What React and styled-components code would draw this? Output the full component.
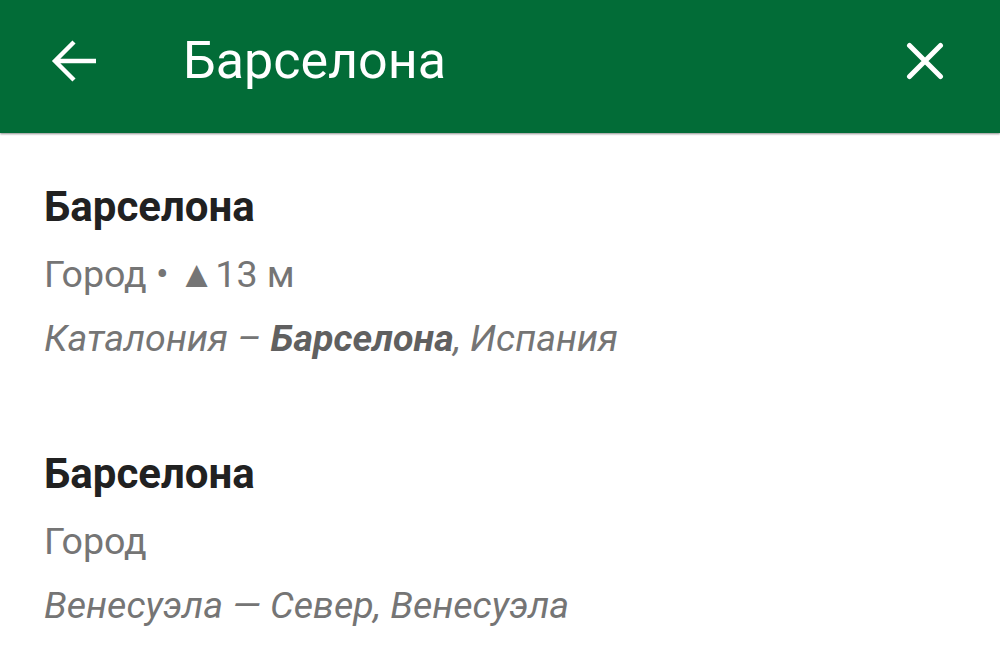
import React from "react";
import styled, { createGlobalStyle } from "styled-components";

const GlobalStyle = createGlobalStyle`
  html, body {
    margin: 0;
    padding: 0;
    background: #ffffff;
    font-family: Roboto, "Noto Sans", sans-serif;
  }
`;

const Screen = styled.div`
  width: 1000px;
  height: 666px;
  overflow: hidden;
  background: #ffffff;
`;

const Toolbar = styled.header`
  position: relative;
  height: 133px;
  background: #026c37;
  box-shadow: 0 1px 2px rgba(0, 0, 0, 0.45);
  display: flex;
  align-items: center;
  padding: 0 51px 12px 44px;
  box-sizing: border-box;
`;

const IconButton = styled.button`
  width: ${(p) => p.size}px;
  height: ${(p) => p.size}px;
  padding: 0;
  border: none;
  background: transparent;
  display: flex;
  align-items: center;
  justify-content: center;
  color: #ffffff;
  cursor: pointer;
`;

const Query = styled.div`
  flex: 1;
  margin-left: 79px;
  color: #ffffff;
  font-size: 52px;
  line-height: 64px;
`;

const Results = styled.ul`
  list-style: none;
  margin: 0;
  padding: 42px 44px 0;
  display: flex;
  flex-direction: column;
  gap: 72px;
`;

const Result = styled.li`
  display: flex;
  flex-direction: column;
`;

const Name = styled.div`
  font-size: 42px;
  font-weight: 700;
  color: #212121;
  line-height: 64px;
  margin-bottom: 3px;
`;

const Line = styled.div`
  font-size: 37.6px;
  color: #757575;
  line-height: 64px;
  white-space: nowrap;
  font-style: ${(p) => (p.italic ? "italic" : "normal")};

  b {
    font-weight: 700;
    color: #606060;
  }
`;

const Arrow = () => (
  <svg width="46" height="44" viewBox="0 0 46 44" fill="none">
    <path
      d="M45 22H4M23 3L4 22l19 19"
      stroke="currentColor"
      strokeWidth="4.4"
      strokeLinejoin="miter"
    />
  </svg>
);

const Cross = () => (
  <svg width="38" height="38" viewBox="0 0 38 38" fill="none">
    <path
      d="M3.5 3.5l31 31M34.5 3.5l-31 31"
      stroke="currentColor"
      strokeWidth="5"
      strokeLinecap="round"
    />
  </svg>
);

const places = [
  {
    name: "Барселона",
    kind: "Город • ▲13 м",
    region: (
      <>
        Каталония – <b>Барселона</b>, Испания
      </>
    ),
  },
  {
    name: "Барселона",
    kind: "Город",
    region: "Венесуэла — Север, Венесуэла",
  },
];

export default function App() {
  return (
    <Screen>
      <GlobalStyle />
      <Toolbar>
        <IconButton size={60} aria-label="Назад">
          <Arrow />
        </IconButton>
        <Query>Барселона</Query>
        <IconButton size={48} aria-label="Очистить">
          <Cross />
        </IconButton>
      </Toolbar>
      <Results>
        {places.map((p, i) => (
          <Result key={i}>
            <Name>{p.name}</Name>
            <Line>{p.kind}</Line>
            <Line italic>{p.region}</Line>
          </Result>
        ))}
      </Results>
    </Screen>
  );
}
